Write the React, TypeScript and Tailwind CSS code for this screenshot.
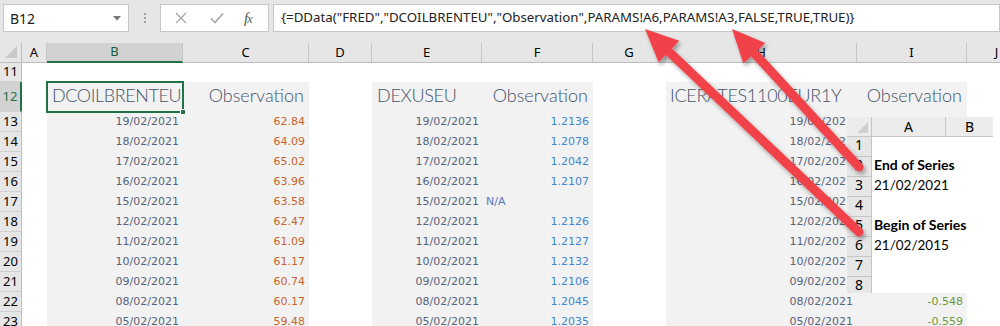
import React from "react";

const cols = [22, 25, 136, 126, 63, 110, 111, 73, 191, 110, 60];
const letters = ["", "A", "B", "C", "D", "E", "F", "G", "H", "I", "J"];

const dates = [
  "19/02/2021",
  "18/02/2021",
  "17/02/2021",
  "16/02/2021",
  "15/02/2021",
  "12/02/2021",
  "11/02/2021",
  "10/02/2021",
  "09/02/2021",
  "08/02/2021",
  "05/02/2021",
];
const brent = ["62.84", "64.09", "65.02", "63.96", "63.58", "62.47", "61.09", "61.17", "60.74", "60.17", "59.48"];
const eur = ["1.2136", "1.2078", "1.2042", "1.2107", "N/A", "1.2126", "1.2127", "1.2132", "1.2106", "1.2045", "1.2035"];
const ice = ["", "", "", "", "", "", "", "", "", "-0.548", "-0.559"];

const uiFont = "font-['Noto_Sans',sans-serif]";
const dataFont = "font-['DejaVu_Sans',sans-serif] text-[11px]";

const Cell = ({ i, gray, children, className = "" }: { i: number; gray?: boolean; children?: React.ReactNode; className?: string }) => (
  <div
    style={{ width: cols[i] }}
    className={`shrink-0 h-full flex items-center overflow-visible whitespace-nowrap ${gray ? "bg-[#f2f2f2]" : ""} ${className}`}
  >
    {children}
  </div>
);

const RowHeader = ({ n, selected }: { n: number; selected?: boolean }) => (
  <div
    style={{ width: cols[0] }}
    className={`shrink-0 h-full flex items-center justify-center text-[13px] ${uiFont} border-b border-[#d0d0d0] ${
      selected
        ? "bg-[#d2d2d2] text-[#217346] border-r-2 border-r-[#217346]"
        : "bg-[#e6e6e6] text-black border-r border-r-[#bdbdbd]"
    }`}
  >
    {n}
  </div>
);

const Arrow = ({ tip, tail }: { tip: [number, number]; tail: [number, number] }) => {
  const dx = tip[0] - tail[0];
  const dy = tip[1] - tail[1];
  const len = Math.hypot(dx, dy);
  const ux = dx / len;
  const uy = dy / len;
  const L = 33;
  const W = 15;
  const bx = tip[0] - ux * L;
  const by = tip[1] - uy * L;
  const nx = -uy;
  const ny = ux;
  const head = `${tip[0]},${tip[1]} ${bx + nx * W},${by + ny * W} ${bx - nx * W},${by - ny * W}`;
  return (
    <g filter="url(#shadow)">
      <line x1={tail[0]} y1={tail[1]} x2={bx + ux * 4} y2={by + uy * 4} stroke="#f1434a" strokeWidth={9} strokeLinecap="round" />
      <polygon points={head} fill="#f1434a" />
    </g>
  );
};

export default function App() {
  const rows = [11, 12, ...dates.map((_, k) => 13 + k)];
  const title = "font-['Lato',sans-serif] font-light text-[18px] text-[#44546a]";

  return (
    <div className="relative w-[1000px] h-[326px] overflow-hidden bg-white">
      {/* formula bar */}
      <div className={`h-[43px] bg-[#e6e6e6] flex items-start pt-[4px] pl-[3px] ${uiFont}`}>
        <div className="w-[126px] h-[28px] bg-white border border-[#c6c6c6] flex items-center justify-between pl-[6px] pr-[7px]">
          <span className="text-[14px] text-[#222]">B12</span>
          <svg width="8" height="5" viewBox="0 0 8 5">
            <polygon points="0,0 8,0 4,4.5" fill="#777" />
          </svg>
        </div>
        <div className="w-[31px] h-[28px] flex flex-col items-center justify-center gap-[2px]">
          <div className="w-[2px] h-[2px] bg-[#a0a0a0]" />
          <div className="w-[2px] h-[2px] bg-[#a0a0a0]" />
          <div className="w-[2px] h-[2px] bg-[#a0a0a0]" />
        </div>
        <div className="w-[109px] h-[28px] bg-white border border-[#c6c6c6] flex items-center">
          <svg width="12" height="12" viewBox="0 0 12 12" className="ml-[14px]">
            <path d="M1 1 L11 11 M11 1 L1 11" stroke="#a6a6a6" strokeWidth="1.3" />
          </svg>
          <svg width="14" height="12" viewBox="0 0 14 12" className="ml-[23px]">
            <path d="M1 6.5 L5 10.5 L13 1.5" stroke="#a6a6a6" strokeWidth="1.6" fill="none" />
          </svg>
          <span className="ml-[20px] font-['Liberation_Serif',serif] italic text-[15px] text-[#555] tracking-[-1px]">
            f<span className="text-[12px]">x</span>
          </span>
        </div>
        <div className="ml-[4px] flex-1 h-[28px] bg-white border border-[#c6c6c6] flex items-center pl-[7px]">
          <span className="text-[13.3px] text-[#222] whitespace-nowrap">
            {'{=DData("FRED","DCOILBRENTEU","Observation",PARAMS!A6,PARAMS!A3,FALSE,TRUE,TRUE)}'}
          </span>
        </div>
      </div>

      {/* column headers */}
      <div className={`h-[20px] flex bg-[#e6e6e6] ${uiFont} text-[13px]`}>
        {letters.map((l, i) =>
          i === 0 ? (
            <div key={i} style={{ width: cols[0] }} className="shrink-0 h-full relative border-r border-[#bdbdbd] border-b">
              <svg width="12" height="12" viewBox="0 0 12 12" className="absolute right-[4px] bottom-[4px]">
                <polygon points="0,12 12,12 12,0" fill="#c8c8c8" />
              </svg>
            </div>
          ) : (
            <div
              key={i}
              style={{ width: cols[i] }}
              className={`shrink-0 h-full flex items-center justify-center border-r border-[#c6c6c6] ${
                i === 2 ? "bg-[#d2d2d2] border-b-2 border-b-[#217346] text-[#1f5c37]" : "border-b border-b-[#bdbdbd] text-black"
              }`}
            >
              {l}
            </div>
          )
        )}
      </div>

      {/* rows */}
      {rows.map((r) => {
        const k = r - 13;
        if (r === 11) {
          return (
            <div key={r} className="flex h-[19px]">
              <RowHeader n={r} />
            </div>
          );
        }
        if (r === 12) {
          return (
            <div key={r} className="flex h-[30px]">
              <RowHeader n={r} selected />
              <Cell i={1} />
              <Cell i={2} gray className={`relative items-end pb-[3px] pl-[5px] tracking-[-0.4px] ${title}`}>
                DCOILBRENTEU
                <div className="absolute -left-[1px] -top-[1px] -right-[1px] -bottom-[1px] border-2 border-[#217346]">
                  <div className="absolute -right-[4px] -bottom-[4px] w-[6px] h-[6px] bg-[#217346] border border-white" />
                </div>
              </Cell>
              <Cell i={3} gray className={`items-end justify-end pb-[3px] pr-[5px] ${title}`}>
                Observation
              </Cell>
              <Cell i={4} />
              <Cell i={5} gray className={`items-end pb-[3px] pl-[5px] tracking-[-0.3px] ${title}`}>
                DEXUSEU
              </Cell>
              <Cell i={6} gray className={`items-end justify-end pb-[3px] pr-[5px] ${title}`}>
                Observation
              </Cell>
              <Cell i={7} />
              <Cell i={8} gray className={`items-end pb-[3px] pl-[4px] tracking-[-0.3px] ${title}`}>
                ICERATES1100EUR1Y
              </Cell>
              <Cell i={9} gray className={`items-end justify-end pb-[3px] pr-[5px] ${title}`}>
                Observation
              </Cell>
            </div>
          );
        }
        const date = <span className="text-[#58647a]">{dates[k]}</span>;
        return (
          <div key={r} className={`flex h-[20px] ${dataFont}`}>
            <RowHeader n={r} />
            <Cell i={1} />
            <Cell i={2} gray className="justify-end pr-[4px] pt-[1px]">
              {date}
            </Cell>
            <Cell i={3} gray className="justify-end pr-[4px] pt-[1px] text-[#c8642a]">
              {brent[k]}
            </Cell>
            <Cell i={4} />
            <Cell i={5} gray className="justify-end pr-[3px] pt-[1px]">
              {date}
            </Cell>
            {eur[k] === "N/A" ? (
              <Cell i={6} gray className="pl-[4px] pt-[1px] text-[#5878c0]">
                N/A
              </Cell>
            ) : (
              <Cell i={6} gray className="justify-end pr-[4px] pt-[1px] text-[#3f86d0]">
                {eur[k]}
              </Cell>
            )}
            <Cell i={7} />
            <Cell i={8} gray className="justify-end pr-[4px] pt-[1px]">
              {date}
            </Cell>
            <Cell i={9} gray className="justify-end pr-[4px] pt-[1px] text-[#6a9a3c]">
              {ice[k]}
            </Cell>
          </div>
        );
      })}

      {/* pasted PARAMS sheet */}
      <div className="absolute left-[847px] top-[117px] w-[146px] h-[176px] overflow-hidden bg-white">
        <div className={`flex h-[20px] bg-[#ececec] ${uiFont} text-[14px]`}>
          <div className="w-[25px] shrink-0 relative border-r border-b border-[#c6c6c6]">
            <svg width="11" height="11" viewBox="0 0 11 11" className="absolute right-[3px] bottom-[3px]">
              <polygon points="0,11 11,11 11,0" fill="#cfcfcf" />
            </svg>
          </div>
          <div className="w-[74px] shrink-0 flex items-center justify-center border-r border-b border-[#c6c6c6]">A</div>
          <div className="w-[47px] shrink-0 flex items-center justify-center border-b border-[#c6c6c6]">B</div>
        </div>
        {[1, 2, 3, 4, 5, 6, 7, 8].map((n) => (
          <div key={n} className="flex h-[20px]">
            <div className={`w-[25px] shrink-0 bg-[#e6e6e6] border-r border-b border-[#c6c6c6] flex items-end justify-center pb-[1px] ${uiFont} text-[14px]`}>
              {n}
            </div>
            <div className="flex-1 flex items-end pl-[2px] pb-[2px] text-black whitespace-nowrap">
              {n === 2 && <span className="font-['Lato',sans-serif] font-bold text-[14px]">End of Series</span>}
              {n === 3 && <span className="font-['Lato',sans-serif] text-[13.5px]">21/02/2021</span>}
              {n === 5 && <span className="font-['Lato',sans-serif] font-bold text-[14px]">Begin of Series</span>}
              {n === 6 && <span className="font-['Lato',sans-serif] text-[13.5px]">21/02/2015</span>}
            </div>
          </div>
        ))}
      </div>

      {/* arrows */}
      <svg className="absolute left-0 top-0 pointer-events-none" width="1000" height="326">
        <defs>
          <filter id="shadow" x="-20%" y="-20%" width="140%" height="140%">
            <feDropShadow dx="2" dy="3" stdDeviation="2" floodColor="#000" floodOpacity="0.35" />
          </filter>
        </defs>
        <Arrow tip={[645, 29]} tail={[859, 232]} />
        <Arrow tip={[732, 29]} tail={[859, 167]} />
      </svg>
    </div>
  );
}
